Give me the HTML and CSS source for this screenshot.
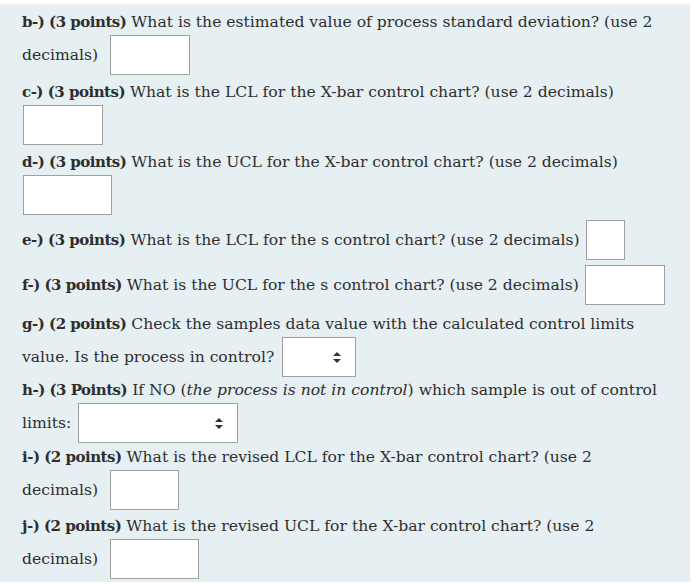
FILE: index.html
```html
<!DOCTYPE html>
<html>
<head>
<meta charset="utf-8">
<link rel="stylesheet" href="styles.css">
</head>
<body>
<div class="panel">
  <div class="q g4">
    <div class="line"><b>b-) (3 points)</b>&nbsp;What is the estimated value of process standard deviation? (use 2</div>
    <div class="row">decimals)<span class="box after-word" style="width:80px"></span></div>
  </div>
  <div class="q g4">
    <div class="line"><b>c-) (3 points)</b>&nbsp;What is the LCL for the X-bar control chart? (use 2 decimals)</div>
    <div class="row"><span class="box first" style="width:80px"></span></div>
  </div>
  <div class="q g5">
    <div class="line"><b>d-) (3 points)</b>&nbsp;What is the UCL for the X-bar control chart? (use 2 decimals)</div>
    <div class="row"><span class="box first" style="width:89px"></span></div>
  </div>
  <div class="q g5">
    <div class="row"><b>e-) (3 points)</b>&nbsp;What is the LCL for the s control chart? (use 2 decimals)<span class="box" style="width:39px"></span></div>
  </div>
  <div class="q g6">
    <div class="row"><b>f-) (3 points)</b>&nbsp;What is the UCL for the s control chart? (use 2 decimals)<span class="box" style="width:80px"></span></div>
  </div>
  <div class="q g0">
    <div class="line"><b>g-) (2 points)</b>&nbsp;Check the samples data value with the calculated control limits</div>
    <div class="row">value. Is the process in control?<span class="select" style="width:74px"><span class="arrows"></span></span></div>
  </div>
  <div class="q g1">
    <div class="line"><b>h-) (3 Points)</b>&nbsp;If NO (<i>the process is not in control</i>) which sample is out of control</div>
    <div class="row">limits:<span class="select narrow" style="width:160px"><span class="arrows"></span></span></div>
  </div>
  <div class="q g3">
    <div class="line"><b>i-) (2 points)</b>&nbsp;What is the revised LCL for the X-bar control chart? (use 2</div>
    <div class="row">decimals)<span class="box after-word" style="width:69px"></span></div>
  </div>
  <div class="q">
    <div class="line"><b>j-) (2 points)</b>&nbsp;What is the revised UCL for the X-bar control chart? (use 2</div>
    <div class="row">decimals)<span class="box after-word" style="width:89px"></span></div>
  </div>
</div>
</body>
</html>
```

FILE: styles.css
```css
html, body {
  margin: 0;
  padding: 0;
  background: #ffffff;
}
body {
  padding-top: 5px;
  font-family: "DejaVu Serif", serif;
  font-size: 15.6px;
  color: #2e2e2e;
}
.panel {
  width: 690px;
  height: 577px;
  box-sizing: border-box;
  background: #e6f0f3;
  padding: 4px 0 0 22px;
  box-shadow: 0 -1px 2px rgba(0,0,0,0.06);
}
.q { display: flex; flex-direction: column; }
.g0 { margin-bottom: 0; }
.g1 { margin-bottom: 1px; }
.g3 { margin-bottom: 3px; }
.g4 { margin-bottom: 4px; }
.g5 { margin-bottom: 5px; }
.g6 { margin-bottom: 6px; }
.line {
  height: 26px;
  line-height: 26px;
  white-space: nowrap;
}
.row {
  height: 40px;
  display: flex;
  align-items: center;
  white-space: nowrap;
}
b {
  font-weight: bold;
  font-size: 15px;
  letter-spacing: -0.5px;
}
.box, .select {
  display: inline-block;
  box-sizing: border-box;
  height: 40px;
  background: #ffffff;
  border: 1px solid #a0a0a0;
  margin-left: 6px;
  position: relative;
}
.select { margin-left: 8px; }
.box.after-word { margin-left: 12px; }
.box.first { margin-left: 1px; }
.select.narrow { margin-left: 7px; }
.arrows {
  position: absolute;
  right: 14px;
  top: 14px;
  width: 8px;
  height: 11px;
}
.arrows::before, .arrows::after {
  content: "";
  position: absolute;
  left: 0;
  border-left: 4px solid transparent;
  border-right: 4px solid transparent;
}
.arrows::before { top: 0; border-bottom: 4px solid #333; }
.arrows::after { bottom: 0; border-top: 4px solid #333; }
```
